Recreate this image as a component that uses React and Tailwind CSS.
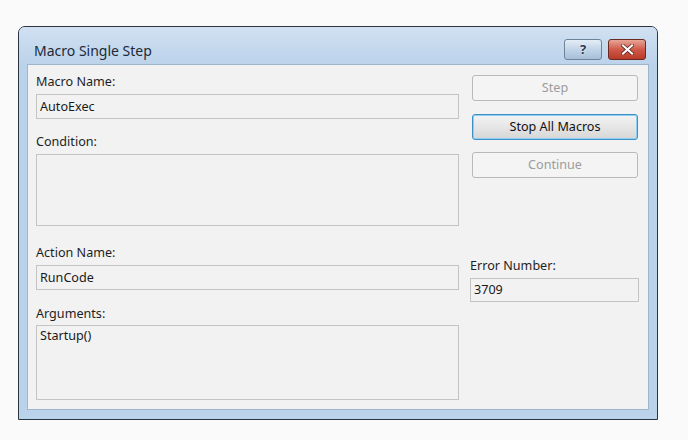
import React from 'react';

const font = { fontFamily: '"Segoe UI", "Noto Sans", "Open Sans", sans-serif' };

function Label({ children, className = '' }) {
  return <div className={`h-4 leading-4 text-[12.6px] text-[#1e1e1e] ${className}`}>{children}</div>;
}

function Field({ value, className = '' }) {
  return (
    <div className={`border border-[#c4c4c4] bg-[#f2f2f2] px-[3px] text-[12.6px] text-[#1a1a1a] ${className}`}>
      {value}
    </div>
  );
}

function Button({ children, disabled, focused }) {
  if (disabled) {
    return (
      <div className="h-[26px] rounded-[3px] border border-[#b9b9b9] bg-[#f4f4f4] flex items-center justify-center text-[12.6px] text-[#9c9c9c]">
        {children}
      </div>
    );
  }
  return (
    <div
      className={`h-[26px] rounded-[3px] border ${focused ? 'border-[#3d8fc6] shadow-[inset_0_0_0_1px_#8fd0f2]' : 'border-[#707070]'} bg-gradient-to-b from-[#f3f3f3] via-[#e6e6e6] to-[#d6d6d6] flex items-center justify-center text-[12.6px] text-[#111]`}
    >
      {children}
    </div>
  );
}

export default function App() {
  return (
    <div className="w-[688px] h-[440px] bg-[#fafafa] pt-[26px] pl-[18px]" style={font}>
      <div className="w-[640px] h-[394px] rounded-t-[7px] border border-[#2b3540] bg-[#bad2ea] flex flex-col shadow-[inset_0_1px_0_#e6eff8]">
        {/* title bar */}
        <div className="h-[37px] shrink-0 flex items-center justify-between pl-[15px] pr-[11px] rounded-t-[6px] bg-gradient-to-b from-[#d0e0f1] to-[#bcd3eb]">
          <span className="text-[14px] text-[#1d2a3a] mt-[9px]">Macro Single Step</span>
          <div className="flex gap-[6px] mt-[8px]">
            <div className="w-[38px] h-[21px] rounded-[3px] border border-[#6f8398] bg-gradient-to-b from-[#e3edf7] via-[#c2d4e7] to-[#a7bfd9] flex items-center justify-center">
              <span className="text-[13px] font-bold text-[#2a3b4f] leading-none" style={{ textShadow: '0 0 2px #fff' }}>?</span>
            </div>
            <div className="w-[38px] h-[21px] rounded-[3px] border border-[#6a2a22] bg-gradient-to-b from-[#e7a597] via-[#d0594a] to-[#b83a26] flex items-center justify-center">
              <svg width="13" height="11" viewBox="0 0 13 11">
                <path d="M2 1.5 L11 9.5 M11 1.5 L2 9.5" stroke="#5a1a12" strokeWidth="3.6" strokeLinecap="square" />
                <path d="M2 1.5 L11 9.5 M11 1.5 L2 9.5" stroke="#ffffff" strokeWidth="2.2" strokeLinecap="square" />
              </svg>
            </div>
          </div>
        </div>
        {/* client */}
        <div className="mx-[8px] h-[346px] bg-[#f2f2f2] border border-[#9fb6cf] flex pl-[8px] pt-[9px]">
          <div className="w-[423px] flex flex-col">
            <Label>Macro Name:</Label>
            <Field value="AutoExec" className="mt-[4px] h-[25px] leading-[23px]" />
            <Label className="mt-[15px]">Condition:</Label>
            <Field value="" className="mt-[4px] h-[72px]" />
            <Label className="mt-[19px]">Action Name:</Label>
            <Field value="RunCode" className="mt-[4px] h-[25px] leading-[23px]" />
            <Label className="mt-[16px]">Arguments:</Label>
            <Field value="Startup()" className="mt-[3px] h-[75px] pt-[2px] leading-4" />
          </div>
          <div className="ml-[11px] w-[169px] flex flex-col">
            <div className="pl-[2px] pr-[1px] pt-[1px] flex flex-col">
              <Button disabled>Step</Button>
              <div className="mt-[13px]"><Button focused>Stop All Macros</Button></div>
              <div className="mt-[12px]"><Button disabled>Continue</Button></div>
            </div>
            <Label className="mt-[80px]">Error Number:</Label>
            <Field value="3709" className="mt-[4px] h-[24px] leading-[22px]" />
          </div>
        </div>
      </div>
    </div>
  );
}
